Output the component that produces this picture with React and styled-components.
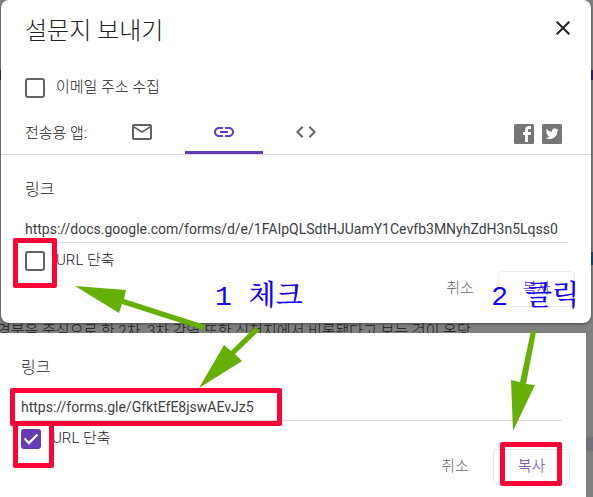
import React from "react";
import styled, { createGlobalStyle } from "styled-components";

const purple = "#673ab7";
const grey = "#5f6368";
const red = "#ff0338";
const green = "#66b005";

const GlobalStyle = createGlobalStyle`
  *, *::before, *::after { box-sizing: border-box; }
  body {
    margin: 0;
    background: #7f7f7f;
    color: #202124;
    font: 300 15px/20px Roboto, "Noto Sans CJK KR", sans-serif;
  }
  button, input { font: inherit; color: inherit; }
`;

const Page = styled.div`
  position: relative;
  min-height: 100vh;
  overflow: hidden;
  background:
    linear-gradient(#0d4a75, #0d4a75) right 252px / 2px 13px no-repeat,
    linear-gradient(#3a1f6b, #3a1f6b) 0 70px / 100% 10px no-repeat,
    linear-gradient(#726f7a, #726f7a) 0 437px / 100% 14px no-repeat,
    #7f7f7f;
`;

const Dialog = styled.section`
  position: relative;
  z-index: 1;
  margin: 0 2px 0 1px;
  border-radius: 8px;
  background: #fff;
  box-shadow: 0 1px 3px rgba(0, 0, 0, 0.4);
`;

const Header = styled.header`
  display: flex;
  align-items: center;
  justify-content: space-between;
  height: 60px;
  padding: 2px 16px 0 24px;
`;

const Title = styled.h1`
  margin: 0;
  font-size: 24px;
  line-height: 32px;
  font-weight: 300;
`;

const IconButton = styled.button`
  display: grid;
  place-items: center;
  width: 24px;
  height: 24px;
  margin-bottom: 6px;
  padding: 0;
  border: 0;
  background: none;
`;

const CollectRow = styled.div`
  padding: 18px 24px 12px;
`;

const Check = styled.div`
  position: relative;
  display: flex;
  align-items: center;
  gap: 11px;
  height: 20px;
  label { line-height: 20px; margin-bottom: 2px; }
`;

const Box = styled.input`
  appearance: none;
  flex: none;
  width: 20px;
  height: 20px;
  margin: 0;
  border: 2px solid ${grey};
  border-radius: 3px;
  background: #fff;
  &:checked { background: ${purple}; border-color: ${purple}; }
`;

const Tick = styled.svg`
  position: absolute;
  left: 0;
  top: 0;
  pointer-events: none;
`;

const SendBar = styled.nav`
  display: flex;
  align-items: stretch;
  height: 45px;
  padding: 0 29px 0 24px;
  border-bottom: 1px solid #dadce0;
`;

const SendLabel = styled.span`
  width: 78px;
  padding-top: 1px;
  line-height: 44px;
`;

const TabList = styled.div`
  display: flex;
  gap: 4px;
`;

const Tab = styled.button`
  display: grid;
  place-items: center;
  width: 78px;
  padding: 3px 0 0;
  border: 0;
  border-bottom: 3px solid transparent;
  border-radius: 3px 3px 0 0;
  background: ${(p) =>
    p.$active ? `linear-gradient(${purple}, ${purple}) bottom / 100% 3px no-repeat border-box` : "none"};
  color: ${(p) => (p.$active ? purple : grey)};
`;

const Social = styled.div`
  display: flex;
  gap: 8px;
  align-items: center;
  margin-left: auto;
  padding-top: 4px;
  a { display: block; height: 20px; }
  svg { display: block; }
`;

const LinkPanel = styled.div`
  padding: 23px 24px 16px;
`;

const Heading = styled.h2`
  margin: 0 0 15px;
  font-size: 16px;
  line-height: 24px;
  font-weight: 300;
`;

const Field = styled.div`
  position: relative;
`;

const UrlInput = styled.input`
  display: block;
  width: 100%;
  height: 26px;
  padding: 0 0 1px;
  border: 0;
  border-bottom: 1px solid #dadce0;
  border-radius: 0;
  background: none;
  color: #3c4043;
  font-size: 14px;
  font-weight: 400;
  outline: 0;
`;

const Option = styled.div`
  margin-top: 8px;
`;

const Actions = styled.div`
  display: flex;
  justify-content: flex-end;
  gap: 8px;
  margin-right: -8px;
`;

const Action = styled.button`
  position: relative;
  width: ${(p) => (p.$primary ? 77 : 60)}px;
  height: 36px;
  padding: 0 0 3px;
  border: 1px solid ${(p) => (p.$primary ? "#e8eaed" : "transparent")};
  border-radius: 4px;
  background: none;
  color: ${(p) => (p.$primary ? purple : grey)};
`;

const Article = styled.p`
  height: 10px;
  margin: 0 0 0 -3px;
  overflow: hidden;
  color: #17181a;
  font-size: 15px;
  line-height: 16px;
  white-space: nowrap;
`;

const Sheet = styled.section`
  margin: 0 7px 0 -4px;
  padding-left: 1px;
  background: #fff;
`;

const Mark = styled.span`
  position: absolute;
  z-index: 2;
  border: 5px solid ${red};
  border-radius: 2px;
  pointer-events: none;
`;

const CheckMark = styled(Mark)`
  left: ${(p) => (p.$joined ? -8 : -12)}px;
  top: ${(p) => (p.$joined ? -8 : -13)}px;
  width: ${(p) => (p.$joined ? 41 : 44)}px;
  height: ${(p) => (p.$joined ? 47 : 50)}px;
`;

const UrlMark = styled(Mark)`
  left: -11px;
  top: -7px;
  width: 272px;
  height: 38px;
`;

const CopyMark = styled(Mark)`
  left: 6px;
  top: -8px;
  width: 62px;
  height: 44px;
`;

const Arrows = styled.svg`
  position: absolute;
  z-index: 3;
  left: ${(p) => (p.$right ? "auto" : "0")};
  right: ${(p) => (p.$right ? "0" : "auto")};
  top: 0;
  pointer-events: none;
`;

const Note = styled.span`
  position: absolute;
  z-index: 3;
  top: 280px;
  left: ${(p) => (p.$right ? "auto" : "215px")};
  right: ${(p) => (p.$right ? "14px" : "auto")};
  color: #1400ff;
  font: 500 28px/36px "Liberation Mono", "Noto Serif CJK KR", "Noto Sans CJK KR", serif;
  white-space: nowrap;
  pointer-events: none;
`;

function Checkbox({ id, label, checked = false, children }) {
  return (
    <Check>
      <Box type="checkbox" id={id} defaultChecked={checked} />
      {checked && (
        <Tick width="20" height="20" viewBox="0 0 20 20" aria-hidden="true">
          <path d="M3.500 9.500 8 14 16.500 5.500" fill="none" stroke="#fff" strokeWidth="2.3" />
        </Tick>
      )}
      <label htmlFor={id}>{label}</label>
      {children}
    </Check>
  );
}

function LinkForm({ id, url, short = false }) {
  return (
    <LinkPanel>
      <Heading>링크</Heading>
      <Field>
        <UrlInput aria-label="링크" defaultValue={url} />
        {short && <UrlMark />}
      </Field>
      <Option>
        <Checkbox id={id} label="URL 단축" checked={short}>
          <CheckMark $joined={short} />
        </Checkbox>
      </Option>
      <Actions>
        <Action type="button">취소</Action>
        <Action type="button" $primary>
          복사
          {short && <CopyMark />}
        </Action>
      </Actions>
    </LinkPanel>
  );
}

const MailIcon = () => (
  <svg width="24" height="24" viewBox="0 0 24 24" fill="currentColor" aria-hidden="true">
    <path d="M20 4H4c-1.100 0-2 .9-2 2v12c0 1.100.9 2 2 2h16c1.100 0 2-.9 2-2V6c0-1.100-.9-2-2-2zm0 14H4V8l8 5 8-5v10zm-8-7L4 6h16l-8 5z" />
  </svg>
);

const LinkIcon = () => (
  <svg width="24" height="24" viewBox="0 0 24 24" fill="currentColor" aria-hidden="true">
    <path d="M3.900 12c0-1.710 1.390-3.100 3.100-3.100h4V7H7c-2.760 0-5 2.240-5 5s2.240 5 5 5h4v-1.900H7c-1.710 0-3.100-1.390-3.100-3.100zM8 13h8v-2H8v2zm9-6h-4v1.900h4c1.710 0 3.100 1.390 3.100 3.100s-1.390 3.100-3.100 3.100h-4V17h4c2.760 0 5-2.240 5-5s-2.240-5-5-5z" />
  </svg>
);

const CodeIcon = () => (
  <svg width="24" height="24" viewBox="0 0 24 24" fill="currentColor" aria-hidden="true">
    <path d="M9.400 16.600 4.800 12l4.600-4.600L8 6l-6 6 6 6 1.400-1.400zm5.200 0 4.600-4.600-4.600-4.600L16 6l6 6-6 6-1.400-1.400z" />
  </svg>
);

export default function App() {
  return (
    <>
      <GlobalStyle />
      <Page>
        <Dialog>
          <Header>
            <Title>설문지 보내기</Title>
            <IconButton type="button" aria-label="닫기">
              <svg width="14" height="14" viewBox="0 0 14 14" aria-hidden="true">
                <path d="M.7.7 13.300 13.300M13.300.7.7 13.300" stroke="#202124" strokeWidth="2" />
              </svg>
            </IconButton>
          </Header>
          <CollectRow>
            <Checkbox id="collect" label="이메일 주소 수집" />
          </CollectRow>
          <SendBar>
            <SendLabel>전송용 앱:</SendLabel>
            <TabList>
              <Tab type="button" aria-label="이메일"><MailIcon /></Tab>
              <Tab type="button" aria-label="링크" $active><LinkIcon /></Tab>
              <Tab type="button" aria-label="HTML 삽입"><CodeIcon /></Tab>
            </TabList>
            <Social>
              <a href="#facebook" aria-label="Facebook">
                <svg width="20" height="20" viewBox="0 0 20 20" aria-hidden="true">
                  <rect width="20" height="20" rx="1.500" fill="#757575" />
                  <path d="M11 18v-7H9V8h2V6.200C11 3.500 12.500 2 15 2h2v3h-1.500C14.400 5 14 5.500 14 6.500V8h3l-.5 3H14v7z" fill="#fff" />
                </svg>
              </a>
              <a href="#twitter" aria-label="Twitter">
                <svg width="20" height="20" viewBox="0 0 20 20" aria-hidden="true">
                  <rect width="20" height="20" rx="1.500" fill="#757575" />
                  <path transform="translate(3.700 3.200) scale(.54)" d="M23.950 4.570a10 10 0 0 1-2.820.77 4.960 4.960 0 0 0 2.160-2.720c-.95.55-2 .95-3.130 1.180a4.920 4.920 0 0 0-8.380 4.480C7.690 8.100 4.070 6.130 1.640 3.160a4.930 4.930 0 0 0 1.520 6.570 4.900 4.900 0 0 1-2.230-.61v.06a4.920 4.920 0 0 0 3.950 4.830 5 5 0 0 1-2.210.08 4.940 4.940 0 0 0 4.600 3.420A9.870 9.870 0 0 1 0 19.540a13.990 13.990 0 0 0 7.550 2.210c9.050 0 14-7.500 14-13.980l-.02-.64a9.940 9.940 0 0 0 2.420-2.560z" fill="#fff" />
                </svg>
              </a>
            </Social>
          </SendBar>
          <LinkForm
            id="shorten"
            url="https://docs.google.com/forms/d/e/1FAIpQLSdtHJUamY1Cevfb3MNyhZdH3n5Lqss0"
          />
        </Dialog>
        <Article>경북을 중심으로 한 2차, 3차 감염 또한 신천지에서 비롯됐다고 보는 것이 온당</Article>
        <Sheet>
          <LinkForm id="shortened" url="https://forms.gle/GfktEfE8jswAEvJz5" short />
        </Sheet>

        <Note>1 체크</Note>
        <Note $right>2 클릭</Note>
        <Arrows width="300" height="400" viewBox="0 0 300 400" fill={green} aria-hidden="true">
          <path d="M75 286 126 290 124 299 205 325 203 330 122 304 119 313z" />
          <path d="M199 388 224 345 231 351 255 327 260 330 235 354 242 361z" />
        </Arrows>
        <Arrows $right width="100" height="440" viewBox="493 0 100 440" fill={green} aria-hidden="true">
          <path d="M513 431 511 380 520 382 531 331 536 332 526 384 535 385z" />
        </Arrows>
      </Page>
    </>
  );
}
